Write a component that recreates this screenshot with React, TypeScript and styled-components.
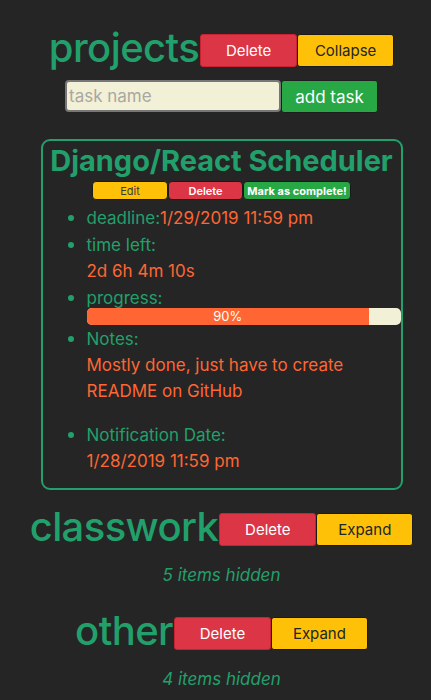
import React from "react";
import styled, { createGlobalStyle } from "styled-components";

const GlobalStyle = createGlobalStyle`
  html, body {
    margin: 0;
    padding: 0;
    background: #252525;
  }
  body {
    font-family: Inter, "Noto Sans", sans-serif;
    color: #22a06b;
  }
`;

interface Task {
  title: string;
  deadline: string;
  timeLeft: string;
  progress: number;
  notes: string;
  notification: string;
}

interface Project {
  name: string;
  expanded: boolean;
  hidden: number;
  tasks: Task[];
}

const projects: Project[] = [
  {
    name: "projects",
    expanded: true,
    hidden: 0,
    tasks: [
      {
        title: "Django/React Scheduler",
        deadline: "1/29/2019 11:59 pm",
        timeLeft: "2d 6h 4m 10s",
        progress: 90,
        notes: "Mostly done, just have to create README on GitHub",
        notification: "1/28/2019 11:59 pm",
      },
    ],
  },
  { name: "classwork", expanded: false, hidden: 5, tasks: [] },
  { name: "other", expanded: false, hidden: 4, tasks: [] },
];

const TaskCard: React.FC<{ task: Task }> = ({ task }) => (
  <Card>
    <CardTitle>{task.title}</CardTitle>
    <SmallButtons>
      <SmallButton kind="edit">Edit</SmallButton>
      <SmallButton kind="delete">Delete</SmallButton>
      <SmallButton kind="complete">Mark as complete!</SmallButton>
    </SmallButtons>
    <Details>
      <li>
        deadline:<Value>{task.deadline}</Value>
      </li>
      <li>
        time left:
        <Block>{task.timeLeft}</Block>
      </li>
      <li>
        progress:
        <Bar>
          <BarFill style={{ width: `${task.progress}%` }}>
            {task.progress}%
          </BarFill>
        </Bar>
      </li>
      <Spaced>
        Notes:
        <Block>{task.notes}</Block>
      </Spaced>
      <li>
        Notification Date:
        <Block>{task.notification}</Block>
      </li>
    </Details>
  </Card>
);

export default function App() {
  return (
    <Page>
      <GlobalStyle />
      {projects.map((p) => (
        <Section key={p.name}>
          <Header>
            <Heading>{p.name}</Heading>
            <Button kind="delete">Delete</Button>
            <Button kind="toggle">{p.expanded ? "Collapse" : "Expand"}</Button>
          </Header>
          {p.expanded ? (
            <>
              <AddRow>
                <TaskInput placeholder="task name" />
                <AddButton>add task</AddButton>
              </AddRow>
              {p.tasks.map((t) => (
                <TaskCard key={t.title} task={t} />
              ))}
            </>
          ) : (
            <Hidden>{p.hidden} items hidden</Hidden>
          )}
        </Section>
      ))}
    </Page>
  );
}

const Page = styled.div`
  padding: 23px 0 0 12px;
  display: flex;
  flex-direction: column;
  align-items: center;
`;

const Section = styled.div`
  display: flex;
  flex-direction: column;
  align-items: center;
  width: 100%;
  margin-bottom: 12px;
`;

const Header = styled.div`
  display: flex;
  align-items: center;
  height: 50px;
`;

const Heading = styled.h2`
  margin: 0 1px 0 0;
  font-size: 40px;
  font-weight: 500;
  letter-spacing: -0.6px;
  line-height: 46px;
  color: #22a06b;
`;

interface ButtonProps {
  kind: "delete" | "toggle";
}

const Button = styled.button<ButtonProps>`
  width: 97px;
  height: 33px;
  margin-top: 4px;
  border: 1px solid ${({ kind }) => (kind === "delete" ? "#c82333" : "#1a1a1a")};
  border-radius: 3px;
  font-family: Inter, sans-serif;
  font-size: 15px;
  background: ${({ kind }) => (kind === "delete" ? "#dc3545" : "#ffc107")};
  color: ${({ kind }) => (kind === "delete" ? "#ffffff" : "#212529")};
`;

const AddRow = styled.div`
  display: flex;
  align-items: center;
  margin-top: 5px;
`;

const TaskInput = styled.input`
  width: 216px;
  height: 32px;
  box-sizing: border-box;
  background: #f2f0d6;
  border: 2px solid #777;
  border-radius: 4px;
  padding: 0 2px;
  font-family: Inter, sans-serif;
  font-size: 17px;
  &::placeholder {
    color: #a8a8a0;
  }
`;

const AddButton = styled.button`
  width: 97px;
  height: 33px;
  margin-top: 2px;
  border: 1px solid #1e1e1e;
  border-radius: 3px;
  background: #28a745;
  color: #ffffff;
  font-family: Inter, sans-serif;
  font-size: 17px;
`;

const Card = styled.div`
  box-sizing: border-box;
  width: 362px;
  margin-top: 26px;
  border: 2px solid #22a06b;
  border-radius: 9px;
  padding: 3px 0 14px;
  display: flex;
  flex-direction: column;
  align-items: center;
`;

const CardTitle = styled.h3`
  margin: 0;
  font-size: 29px;
  font-weight: 700;
  letter-spacing: -0.05px;
  line-height: 34px;
  color: #22a06b;
`;

const SmallButtons = styled.div`
  display: flex;
  margin-top: 3px;
`;

interface SmallButtonProps {
  kind: "edit" | "delete" | "complete";
}

const smallColors = {
  edit: { bg: "#ffc107", fg: "#3b3b3b", w: 76, weight: 400 },
  delete: { bg: "#dc3545", fg: "#ffffff", w: 75, weight: 600 },
  complete: { bg: "#28a745", fg: "#ffffff", w: 108, weight: 700 },
};

const SmallButton = styled.button<SmallButtonProps>`
  width: ${({ kind }) => smallColors[kind].w}px;
  height: 19px;
  padding: 0;
  border: 1px solid #1a1a1a;
  border-radius: 4px;
  background: ${({ kind }) => smallColors[kind].bg};
  color: ${({ kind }) => smallColors[kind].fg};
  font-family: Inter, sans-serif;
  font-size: 11px;
  font-weight: ${({ kind }) => smallColors[kind].weight};
`;

const Details = styled.ul`
  align-self: stretch;
  margin: 4px 0 0;
  padding-left: 44px;
  font-size: 17px;
  line-height: 26px;
  color: #22a06b;
  li::marker {
    color: #22a06b;
    font-size: 20px;
  }
`;

const Spaced = styled.li`
  margin-bottom: 17px;
`;

const Value = styled.span`
  color: #ff6633;
`;

const Block = styled.div`
  color: #ff6633;
`;

const Bar = styled.div`
  height: 17px;
  margin-top: -3px;
  border-radius: 5px;
  background: #f2f0d6;
  overflow: hidden;
`;

const BarFill = styled.div`
  height: 100%;
  background: #ff6633;
  color: #ffffff;
  font-size: 13px;
  line-height: 17px;
  text-align: center;
`;

const Hidden = styled.div`
  margin-top: 10px;
  font-size: 17px;
  font-style: italic;
  color: #22a06b;
  line-height: 26px;
  margin-bottom: 6px;
`;
